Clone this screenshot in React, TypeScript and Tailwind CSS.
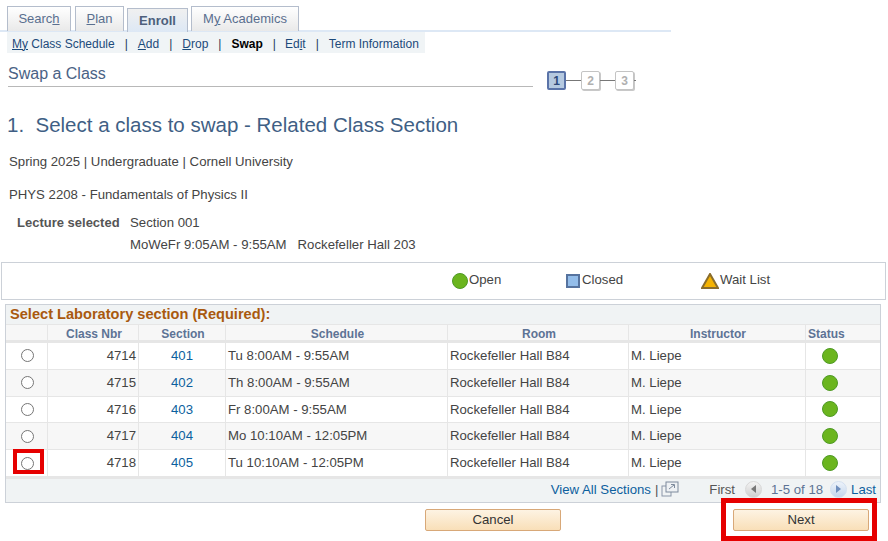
const font = "font-['Liberation_Sans',Arial,sans-serif]";

const rows = [
  { nbr: "4714", sec: "401", sched: "Tu 8:00AM - 9:55AM" },
  { nbr: "4715", sec: "402", sched: "Th 8:00AM - 9:55AM" },
  { nbr: "4716", sec: "403", sched: "Fr 8:00AM - 9:55AM" },
  { nbr: "4717", sec: "404", sched: "Mo 10:10AM - 12:05PM" },
  { nbr: "4718", sec: "405", sched: "Tu 10:10AM - 12:05PM" },
];

const cols = "grid grid-cols-[41px_91px_87px_222px_181px_177px_75px]";

function Tab({ children, active, w }: { children: React.ReactNode; active?: boolean; w: string }) {
  return (
    <div className={`${w} ${active
      ? "mt-[2px] h-[24px] flex items-center justify-center border border-b-0 border-[#b4bdcc] bg-gradient-to-b from-[#f0f0f0] to-[#dde8f5] text-[13px] font-bold text-[#4d5f7c]"
      : "h-[25px] flex items-center justify-center border border-b-0 border-[#b4bdcc] bg-gradient-to-b from-white to-[#e9e9e9] text-[13px] text-[#5a6f8f]"}`}>
      <span>{children}</span>
    </div>
  );
}

function Dot({ size = 16 }: { size?: number }) {
  return (
    <svg width={size} height={size} viewBox="0 0 16 16" className="shrink-0">
      <circle cx="8" cy="8" r="7.5" fill="#6bb51e" stroke="#4f9a25" />
    </svg>
  );
}

function Radio() {
  return <div className="w-[13px] h-[13px] rounded-full border border-[#767676] bg-white" />;
}

function NavLink({ children }: { children: React.ReactNode }) {
  return <span className="text-[#1c4a7a]">{children}</span>;
}

function Sep() {
  return <span className="text-[#1c3a5a] mx-[10px]">|</span>;
}

function Step({ n, active }: { n: string; active?: boolean }) {
  return (
    <div className={active
      ? "w-[19px] h-[19px] rounded-[2px] border-2 border-[#5a73a8] bg-[#b5c9e0] flex items-center justify-center text-[12px] font-bold text-[#2e4a7a]"
      : "w-[19px] h-[19px] rounded-[2px] border border-[#c4c4c4] shadow-[1px_1px_0_#c8c8c8] bg-white flex items-center justify-center text-[12px] font-bold text-[#b0b0b0]"}>
      {n}
    </div>
  );
}

function Btn({ children }: { children: React.ReactNode }) {
  return (
    <button className="w-[136px] h-[22px] rounded-[2px] border border-[#d8a878] bg-gradient-to-b from-[#fdf3e3] to-[#f9dfb8] text-[13.2px] text-[#333]">
      {children}
    </button>
  );
}

export default function App() {
  return (
    <div className={`${font} relative w-[888px] h-[541px] overflow-hidden bg-white text-[13.2px] text-[#444]`}>
      <div className="w-[671px] h-[32px] pt-[6px] pl-[7px] flex items-start gap-[3px] border-b-2 border-[#dde8f5]">
        <Tab w="w-[64px] mr-[1px]">Searc<u>h</u></Tab>
        <Tab w="w-[49px]"><u>P</u>lan</Tab>
        <Tab w="w-[61px]" active>Enroll</Tab>
        <Tab w="w-[108px]">M<u>y</u> Academics</Tab>
      </div>
      <div className="ml-[7px] w-[418px] h-[21px] pl-[5px] pt-[2px] flex items-center bg-[#f0f4f6] text-[12px]">
        <NavLink><u>My</u> Class Schedule</NavLink>
        <Sep />
        <NavLink><u>A</u>dd</NavLink>
        <Sep />
        <NavLink><u>D</u>rop</NavLink>
        <Sep />
        <span className="font-bold text-black">Swap</span>
        <span className="text-[#1c3a5a] ml-[10px] mr-[9px]">|</span>
        <NavLink>Ed<u>i</u>t</NavLink>
        <Sep />
        <NavLink>Term Information</NavLink>
      </div>

      <div className="flex items-start ml-[8px] mt-[12px]">
        <div className="w-[525px] h-[22px] border-b border-[#b8b8b8] text-[16px] leading-[18px] text-[#4a6285]">Swap a Class</div>
        <div className="ml-[14px] mt-[4px] pt-[2px] flex items-center">
          <Step n="1" active />
          <div className="w-[15px] h-px bg-[#777]" />
          <Step n="2" />
          <div className="w-[15px] h-px bg-[#777]" />
          <Step n="3" />
          <div className="w-[2px] h-px bg-[#777]" />
        </div>
      </div>

      <h1 className="ml-[7px] mt-[23px] text-[20.5px] leading-[24px] font-normal text-[#3f5f85]">1.&nbsp; Select a class to swap - Related Class Section</h1>

      <p className="ml-[9px] mt-[17px] leading-[16px]">Spring 2025 | Undergraduate | Cornell University</p>
      <p className="ml-[9px] mt-[17px] leading-[16px]">PHYS 2208 - Fundamentals of Physics II</p>

      <div className="mt-[11px] ml-[17px] flex">
        <div className="w-[113px] mt-[1px] font-bold text-[13px] leading-[16px] text-[#555]">Lecture selected</div>
        <div className="leading-[22px] -mt-[2px]">
          <div>Section 001</div>
          <div>MoWeFr 9:05AM - 9:55AM&nbsp;&nbsp; Rockefeller Hall 203</div>
        </div>
      </div>

      <div className="ml-[1px] mt-[6px] w-[885px] h-[38px] border border-[#ccd1d8] flex items-center">
        <div className="ml-[450px] w-[114px] flex items-center gap-[1px]"><Dot /><span className="-mt-[2px]">Open</span></div>
        <div className="flex w-[135px] items-center gap-[1px]">
          <div className="w-[14px] h-[14px] bg-[#93bdea] border-2 border-[#56739f]" />
          <span className="ml-[1px] -mt-[2px]">Closed</span>
        </div>
        <div className="flex items-center gap-[1px]">
          <svg width="18" height="16" viewBox="0 0 18 16">
            <polygon points="9,1 17,15 1,15" fill="#f5b301" stroke="#8a6d2c" strokeWidth="2" />
          </svg>
          <span className="-mt-[2px]">Wait List</span>
        </div>
      </div>

      <div className="ml-[5px] mt-[4px] w-[876px] border border-[#ccd1d8]">
        <div className="h-[19px] bg-[#f0f3f4] pl-[4px] text-[14.6px] leading-[18px] font-bold text-[#a9590f]">Select Laboratory section (Required):</div>
        <div className={`${cols} h-[19px] bg-[#f7f7f7] border-b-[3px] border-t border-[#e6e6e6] font-bold text-[12px] text-[#5d7395] text-center leading-[18px]`}>
          <div />
          {["Class Nbr", "Section", "Schedule", "Room", "Instructor"].map(h => (
            <div key={h} className="border-l border-[#e6e6e6] pl-[2px]">{h}</div>
          ))}
          <div className="border-l border-[#e6e6e6] text-left pl-[2px]">Status</div>
        </div>
        {rows.map((r, i) => (
          <div key={r.nbr} className={`${cols} h-[26.8px] border-b border-[#e6e6e6] ${i % 2 ? "bg-[#f7f7f7]" : "bg-white"}`}>
            <div className="flex items-center justify-center pl-[1px]"><Radio /></div>
            <div className="border-l border-[#e6e6e6] flex items-center justify-end pr-[2px]">{r.nbr}</div>
            <div className="border-l border-[#e6e6e6] flex items-center justify-center text-[#0c5f9e]">{r.sec}</div>
            <div className="border-l border-[#e6e6e6] flex items-center pl-[2px]">{r.sched}</div>
            <div className="border-l border-[#e6e6e6] flex items-center pl-[2px]">Rockefeller Hall B84</div>
            <div className="border-l border-[#e6e6e6] flex items-center pl-[2px]">M. Liepe</div>
            <div className="border-l border-[#e6e6e6] flex items-center pl-[16px]"><Dot /></div>
          </div>
        ))}
        <div className="h-[25px] bg-[#f0f3f4] border-t-2 border-[#e6e6e6] flex items-center justify-end pr-[4px] pb-[2px]">
          <span className="text-[#0c5f9e]">View All Sections</span>
          <span className="ml-[4px] text-[#555]">|</span>
          <svg width="18" height="16" viewBox="0 0 18 16" className="ml-[3px]" fill="none">
            <rect x="1" y="5" width="9" height="10" stroke="#8a96a8" />
            <rect x="5" y="1" width="12" height="10" fill="#eef1f4" stroke="#7d8a9c" />
            <path d="M8 8l5-4M10 3.5h3.5V7" stroke="#7d8a9c" />
          </svg>
          <span className="ml-[30px] text-[#555]">First</span>
          <div className="ml-[10px] w-[17px] h-[17px] rounded-full bg-gradient-to-b from-[#f4f4f4] to-[#cfcfcf] border border-[#d8d8d8] flex items-center justify-center">
            <div className="w-0 h-0 border-y-[4px] border-y-transparent border-r-[5px] border-r-[#777]" />
          </div>
          <span className="ml-[9px] text-[#5d7395]">1-5 of 18</span>
          <div className="ml-[7px] w-[17px] h-[17px] rounded-full bg-gradient-to-b from-[#edf3fa] to-[#c4d6ec] border border-[#d3e0f0] flex items-center justify-center">
            <div className="w-0 h-0 border-y-[4px] border-y-transparent border-l-[5px] border-l-[#6f8fbd]" />
          </div>
          <span className="ml-[4px] text-[#0c5f9e]">Last</span>
        </div>
      </div>

      <div className="ml-[425px] mt-[6px] flex gap-[172px]">
        <Btn>Cancel</Btn>
        <Btn>Next</Btn>
      </div>

      <div className="absolute left-[13px] top-[449px] w-[31px] h-[25px] border-[4px] border-[#e60000]" />
      <div className="absolute left-[721px] top-[498px] w-[156px] h-[43px] border-[5px] border-[#e60000]" />
    </div>
  );
}
